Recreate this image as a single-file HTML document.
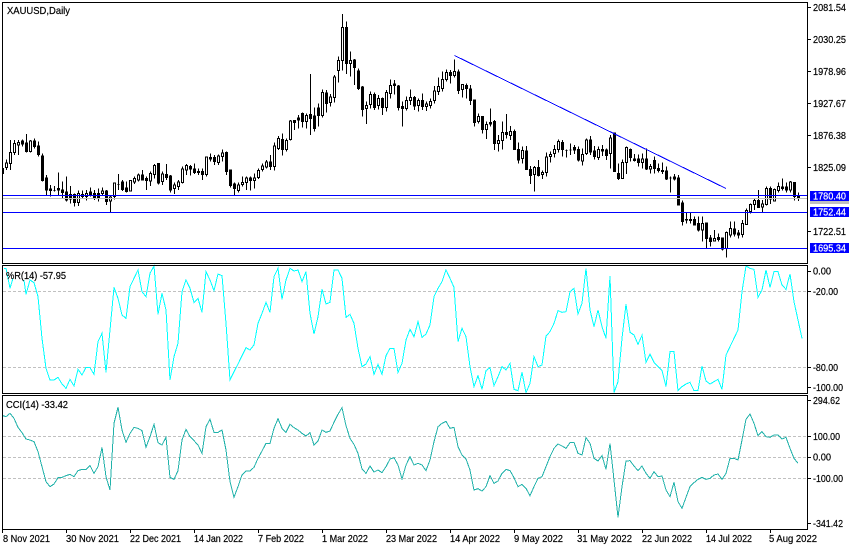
<!DOCTYPE html>
<html><head><meta charset="utf-8"><title>XAUUSD Daily</title>
<style>
html,body{margin:0;padding:0;background:#fff;width:860px;height:550px;overflow:hidden}
svg{display:block}
text{font-family:"Liberation Sans",sans-serif;font-size:10.5px;fill:#000;stroke:#000;stroke-width:.2px}
text.w{fill:#fff;stroke:#fff}
.n{vector-effect:non-scaling-stroke}
</style></head><body>
<svg width="860" height="550" viewBox="0 0 860 550" xmlns="http://www.w3.org/2000/svg">
<rect width="860" height="550" fill="#fff"/>

<!-- candles: y values in 3x space -->
<g transform="scale(1 .33333)" shape-rendering="crispEdges" stroke="#000" stroke-width="1">
<path class="n" fill="none" d="M3.5 505V520M6.5 478V510M10.5 420V510M14.5 420V465M18.5 420V465M22.5 418V440M26.5 402V458M30.5 420V458M34.5 415V445M38.5 425V470M42.5 460V545M46.5 525V585M50.5 555V590M54.5 558V575M58.5 518V585M62.5 545V595M66.5 530V605M70.5 558V610M74.5 580V620M78.5 572V618M82.5 572V595M86.5 570V602M90.5 562V590M94.5 570V600M98.5 565V605M102.5 562V585M106.5 570V615M110.5 585V636M114.5 548V598M118.5 522V570M122.5 540V573M126.5 545V578M130.5 540V575M134.5 530V552M138.5 520V545M142.5 510V540M146.5 530V570M150.5 515V558M154.5 492V535M158.5 490V553M162.5 515V555M166.5 492V540M170.5 525V578M174.5 548V582M178.5 540V570M182.5 500V550M186.5 492V525M190.5 495V527M194.5 490V522M198.5 505V525M202.5 505V540M206.5 470V530M210.5 460V485M214.5 465V495M218.5 463V495M222.5 448V485M226.5 455V525M230.5 508V563M234.5 548V585M238.5 548V577M242.5 530V560M246.5 530V570M250.5 530V572M254.5 520V565M258.5 505V537M262.5 490V515M266.5 480V505M270.5 465V510M274.5 428V512M278.5 408V450M282.5 400V467M286.5 415V455M290.5 360V422M294.5 360V390M298.5 345V385M302.5 337V382M306.5 340V385M310.5 222V405M314.5 322V395M318.5 310V380M322.5 268V352M326.5 270V338M330.5 282V320M334.5 225V308M338.5 170V248M342.5 42V212M346.5 65V222M350.5 155V230M354.5 177V255M358.5 205V270M362.5 258V350M366.5 305V372M370.5 275V325M374.5 278V330M378.5 285V328M382.5 292V345M386.5 270V335M390.5 238V295M394.5 240V283M398.5 255V332M402.5 305V380M406.5 290V332M410.5 268V315M414.5 288V330M418.5 295V335M422.5 280V330M426.5 305V333M430.5 295V325M434.5 258V310M438.5 232V285M442.5 215V275M446.5 208V245M450.5 210V250M454.5 178V232M458.5 208V282M462.5 253V292M466.5 250V295M470.5 255V315M474.5 298V380M478.5 340V370M482.5 348V400M486.5 365V417M490.5 325V380M494.5 360V450M498.5 405V455M502.5 365V448M506.5 342V415M510.5 378V420M514.5 388V450M518.5 428V490M522.5 440V490M526.5 438V510M530.5 498V552M534.5 498V575M538.5 480V530M542.5 512V537M546.5 458V530M550.5 455V488M554.5 435V472M558.5 418V458M562.5 420V470M566.5 448V473M570.5 430V465M574.5 435V462M578.5 440V485M582.5 445V497M586.5 415V465M590.5 408V465M594.5 438V478M598.5 440V480M602.5 435V468M606.5 445V480M610.5 405V505M614.5 398V515M618.5 490V540M622.5 478V535M626.5 440V522M630.5 445V485M634.5 462V485M638.5 463V500M642.5 460V505M646.5 445V510M650.5 492V520M654.5 470V520M658.5 490V517M662.5 487V522M666.5 500V540M670.5 530V578M674.5 522V542M678.5 525V617M682.5 602V677M686.5 638V670M690.5 638V670M694.5 650V677M698.5 650V695M702.5 650V725M706.5 668V745M710.5 705V740M714.5 690V725M718.5 700V725M722.5 712V752M726.5 695V773M730.5 665V712M734.5 665V710M738.5 690V715M742.5 660V713M746.5 625V675M750.5 610V640M754.5 595V630M758.5 570V622M762.5 600V636M766.5 560V617M770.5 560V612M774.5 565V605M778.5 548V578M782.5 535V572M786.5 547V578M790.5 543V578M794.5 546V602M798.5 578V603M800 595H803"/>
<!-- bearish -->
<path class="n" fill="#000" d="M2.5 505h1V520h-1zM21.5 423h2V432h-2zM25.5 429h2V455h-2zM33.5 423h2V440h-2zM37.5 438h2V463h-2zM41.5 468h2V542h-2zM45.5 534h2V570h-2zM49.5 567h2V572h-2zM53.5 571h2V571h-2zM57.5 565h2V570h-2zM61.5 570h2V578h-2zM65.5 576h2V600h-2zM69.5 583h2V597h-2zM73.5 583h2V608h-2zM89.5 576h2V585h-2zM93.5 580h2V596h-2zM97.5 580h2V595h-2zM105.5 573h2V605h-2zM117.5 553h2V553h-2zM121.5 546h2V568h-2zM125.5 564h2V574h-2zM141.5 525h2V540h-2zM145.5 536h2V541h-2zM157.5 491h2V549h-2zM165.5 524h2V532h-2zM169.5 528h2V570h-2zM189.5 500h2V507h-2zM193.5 507h2V518h-2zM197.5 514h2V518h-2zM201.5 514h2V523h-2zM209.5 473h2V477h-2zM213.5 473h2V485h-2zM225.5 457h2V515h-2zM229.5 510h2V556h-2zM233.5 552h2V565h-2zM249.5 534h2V541h-2zM269.5 486h2V500h-2zM281.5 418h2V449h-2zM293.5 362h2V367h-2zM297.5 354h2V360h-2zM301.5 340h2V365h-2zM309.5 343h2V356h-2zM313.5 348h2V386h-2zM317.5 324h2V347h-2zM325.5 279h2V311h-2zM345.5 82h2V190h-2zM353.5 180h2V203h-2zM357.5 213h2V266h-2zM361.5 261h2V329h-2zM373.5 283h2V323h-2zM381.5 295h2V322h-2zM393.5 252h2V256h-2zM397.5 258h2V323h-2zM401.5 319h2V326h-2zM413.5 292h2V318h-2zM421.5 301h2V320h-2zM449.5 217h2V227h-2zM457.5 216h2V272h-2zM465.5 256h2V266h-2zM469.5 267h2V302h-2zM473.5 300h2V368h-2zM481.5 349h2V389h-2zM489.5 367h2V372h-2zM493.5 364h2V431h-2zM505.5 397h2V404h-2zM513.5 394h2V449h-2zM517.5 448h2V480h-2zM525.5 453h2V509h-2zM529.5 508h2V527h-2zM537.5 502h2V526h-2zM561.5 427h2V448h-2zM565.5 452h2V452h-2zM569.5 450h2V450h-2zM573.5 443h2V450h-2zM577.5 448h2V480h-2zM589.5 420h2V456h-2zM593.5 453h2V470h-2zM601.5 449h2V453h-2zM605.5 450h2V467h-2zM613.5 399h2V514h-2zM617.5 520h2V535h-2zM629.5 448h2V473h-2zM633.5 477h2V481h-2zM637.5 477h2V488h-2zM645.5 477h2V507h-2zM653.5 481h2V506h-2zM657.5 506h2V512h-2zM661.5 512h2V514h-2zM665.5 513h2V537h-2zM669.5 534h2V534h-2zM673.5 531h2V537h-2zM677.5 534h2V615h-2zM681.5 609h2V665h-2zM685.5 658h2V660h-2zM689.5 658h2V662h-2zM693.5 658h2V675h-2zM697.5 671h2V690h-2zM705.5 669h2V716h-2zM709.5 714h2V725h-2zM717.5 712h2V718h-2zM721.5 714h2V747h-2zM733.5 687h2V702h-2zM737.5 699h2V705h-2zM757.5 601h2V622h-2zM769.5 565h2V597h-2zM781.5 561h2V566h-2zM785.5 561h2V570h-2zM793.5 547h2V590h-2zM797.5 589h2V596h-2z"/>
<!-- bullish -->
<path class="n" fill="#fff" d="M5.5 489h2V503h-2zM9.5 457h2V491h-2zM13.5 431h2V458h-2zM17.5 427h2V435h-2zM29.5 423h2V455h-2zM77.5 580h2V608h-2zM81.5 583h2V590h-2zM85.5 580h2V590h-2zM101.5 573h2V581h-2zM109.5 591h2V603h-2zM113.5 549h2V590h-2zM129.5 541h2V573h-2zM133.5 535h2V546h-2zM137.5 525h2V540h-2zM149.5 520h2V543h-2zM153.5 496h2V524h-2zM161.5 522h2V545h-2zM173.5 555h2V566h-2zM177.5 546h2V560h-2zM181.5 507h2V548h-2zM185.5 497h2V510h-2zM205.5 471h2V524h-2zM217.5 468h2V487h-2zM221.5 459h2V470h-2zM237.5 555h2V571h-2zM241.5 547h2V554h-2zM245.5 534h2V548h-2zM253.5 534h2V541h-2zM257.5 511h2V533h-2zM261.5 498h2V508h-2zM265.5 486h2V501h-2zM273.5 438h2V499h-2zM277.5 415h2V446h-2zM285.5 421h2V449h-2zM289.5 363h2V419h-2zM305.5 346h2V365h-2zM321.5 277h2V346h-2zM329.5 291h2V308h-2zM333.5 231h2V292h-2zM337.5 181h2V212h-2zM341.5 82h2V181h-2zM349.5 181h2V190h-2zM365.5 316h2V326h-2zM369.5 283h2V314h-2zM377.5 295h2V317h-2zM385.5 277h2V322h-2zM389.5 256h2V280h-2zM405.5 301h2V325h-2zM409.5 292h2V302h-2zM417.5 301h2V317h-2zM425.5 312h2V320h-2zM429.5 304h2V317h-2zM433.5 273h2V301h-2zM437.5 259h2V275h-2zM441.5 238h2V266h-2zM445.5 217h2V238h-2zM453.5 214h2V227h-2zM461.5 254h2V269h-2zM477.5 349h2V365h-2zM485.5 373h2V388h-2zM497.5 421h2V431h-2zM501.5 397h2V422h-2zM509.5 394h2V407h-2zM521.5 452h2V476h-2zM533.5 502h2V524h-2zM541.5 517h2V524h-2zM545.5 471h2V517h-2zM549.5 463h2V470h-2zM553.5 448h2V461h-2zM557.5 424h2V448h-2zM581.5 463h2V483h-2zM585.5 420h2V461h-2zM597.5 449h2V473h-2zM609.5 414h2V461h-2zM621.5 488h2V535h-2zM625.5 443h2V487h-2zM641.5 477h2V487h-2zM649.5 499h2V507h-2zM701.5 670h2V690h-2zM713.5 716h2V723h-2zM725.5 697h2V745h-2zM729.5 686h2V705h-2zM741.5 670h2V704h-2zM745.5 631h2V673h-2zM749.5 613h2V635h-2zM753.5 601h2V614h-2zM761.5 612h2V621h-2zM765.5 565h2V613h-2zM773.5 569h2V603h-2zM777.5 559h2V572h-2zM789.5 546h2V570h-2z"/>
</g>

<!-- horizontal levels -->
<g shape-rendering="crispEdges">
<rect x="3" y="198" width="804" height="1" fill="#c0c0c0"/>
<rect x="3" y="195" width="804" height="1" fill="#0000ff"/>
<rect x="3" y="212" width="804" height="1" fill="#0000ff"/>
<rect x="3" y="248" width="804" height="1" fill="#0000ff"/>
</g>
<path d="M454.5 55.5L726 188.5" stroke="#0000ff" fill="none" shape-rendering="crispEdges"/>

<!-- dashed levels -->
<g stroke="#c0c0c0" stroke-dasharray="3 2" shape-rendering="crispEdges">
<path d="M3 291.5H807M3 367.5H807M3 436.5H807M3 457.5H807M3 478.5H807"/>
</g>

<!-- %R -->
<g transform="translate(0 260) scale(1 .33333)" fill="none" shape-rendering="crispEdges">
<polyline class="n" stroke="#00ffff" points="4,25 6,25 10,85 13,55"/>
<polyline class="n" stroke="#00ffff" points="24,60 26,103 30,60 34,68 38,110 42,235 46,325 50,360 54,360 58,352 62,372 66,385 70,358 74,378 78,328 82,345 86,322 90,323 94,343 98,245 102,220 106,337 110,210 114,82 118,115 122,165 126,175 130,80 134,55 138,30 142,95 146,110 150,40 154,18 158,163 162,100 166,150 170,360 174,290 178,250 182,95 186,60 190,85 194,127 198,115 202,157 206,35 210,60 214,92 218,42 222,47 226,190 230,360 234,335 238,312 242,287 246,263 250,270 254,255 258,190 262,160 266,127 270,157 274,50 278,25 282,118 286,60 290,25 294,33 298,30 302,65 306,35 310,160 314,222 318,170 322,88 326,132 330,127 334,30 338,30 342,55 346,172 350,163 354,190 358,265 362,320 366,312 370,290 374,343 378,313 382,343 386,287 390,265 394,265 398,337 402,310 406,240 410,208 414,230 418,185 422,232 426,222 430,195 434,110 438,85 442,65 446,30 450,55 454,82 458,245 462,205 466,230 470,320 474,380 478,347 482,388 486,332 490,323 494,377 498,350 502,320 506,330 510,310 514,388 518,392 522,337 526,398 530,370 534,290 538,320 542,315 546,228 550,215 554,190 558,152 562,157 566,155 570,95 574,85 578,162 582,130 586,25 590,150 594,200 598,150 602,200 606,235 610,48 614,398 618,365 622,235 626,132 630,217 634,225 638,253 642,226 646,307 650,283 654,307 658,320 662,332 666,380 670,275 674,275 678,392 682,380 686,372 690,367 694,392 698,392 702,318 706,363 710,372 714,365 718,358 722,388 726,285 730,260 734,235 738,210 742,95 746,18 750,25 754,28 758,112 762,90 766,30 770,82 774,35 778,35 782,75 786,88 790,42 794,125 798,180 802,235"/>
<polyline class="n" stroke="#20b2aa" points="3,467 6,470 10,460 14,475 18,502 22,518 26,537 30,540 34,545 38,575 42,620 46,665 50,680 54,672 58,653 62,652 66,647 70,643 74,650 78,632 82,628 86,628 90,617 94,640 98,620 102,562 106,650 110,690 114,490 118,442 122,510 126,547 130,520 134,502 138,505 142,512 146,562 150,530 154,493 158,548 162,555 166,532 170,652 174,658 178,632 182,540 186,508 190,530 194,542 198,555 202,580 206,500 210,478 214,517 218,517 222,510 226,570 230,665 234,712 238,680 242,645 246,633 250,633 254,622 258,595 262,573 266,550 270,550 274,505 278,476 282,505 286,517 290,493 294,503 298,510 302,520 306,528 310,518 314,555 318,543 322,510 326,517 330,513 334,487 338,463 342,443 346,497 350,535 354,553 358,580 362,627 366,640 370,618 374,636 378,630 382,638 386,620 390,597 394,593 398,615 402,657 406,615 410,590 414,615 418,610 422,615 426,632 430,600 434,545 438,500 442,490 446,484 450,505 454,502 458,560 462,585 466,597 470,630 474,690 478,686 482,693 486,680 490,647 494,670 498,663 502,640 506,628 510,632 514,653 518,680 522,673 526,685 530,707 534,680 538,655 542,650 546,620 550,590 554,565 558,552 562,558 566,565 570,548 574,547 578,580 582,585 586,533 590,550 594,595 598,603 602,587 606,628 610,550 614,660 618,772 622,680 626,603 630,602 634,618 638,632 642,618 646,640 650,655 654,635 658,650 662,648 666,690 670,710 674,667 678,725 682,745 686,712 690,680 694,668 698,658 702,652 706,658 710,655 714,645 718,642 722,658 726,640 730,595 734,595 738,600 742,540 746,478 750,462 754,490 758,527 762,515 766,530 770,532 774,525 778,525 782,537 786,532 790,565 794,595 798,610"/>
</g>

<!-- frames -->
<g stroke="#000" fill="none" shape-rendering="crispEdges">
<path d="M2.5 2.5H807.5V263.5H2.5ZM2.5 265.5H807.5V393.5H2.5ZM2.5 395.5H807.5V529.5H2.5Z"/>
<path d="M808 7.5h3M808 39.5h3M808 71.5h3M808 103.5h3M808 135.5h3M808 167.5h3M808 231.5h3M808 271.5h3M808 291.5h3M808 367.5h3M808 387.5h3M808 400.5h3M808 436.5h3M808 457.5h3M808 478.5h3M808 523.5h3"/>
<path d="M2.5 530v3M66.5 530v3M130.5 530v3M194.5 530v3M258.5 530v3M322.5 530v3M386.5 530v3M450.5 530v3M514.5 530v3M578.5 530v3M642.5 530v3M706.5 530v3M770.5 530v3"/>
</g>

<!-- price labels -->
<g shape-rendering="crispEdges">
<rect x="810" y="200" width="39" height="4" fill="#c0c0c0"/>
<rect x="810" y="191" width="39" height="10" fill="#0000ff"/>
<rect x="810" y="207" width="39" height="10" fill="#0000ff"/>
<rect x="810" y="243" width="39" height="10" fill="#0000ff"/>
</g>
<g>
<text x="813" y="11" textLength="33" lengthAdjust="spacingAndGlyphs">2081.54</text>
<text x="813" y="43" textLength="33" lengthAdjust="spacingAndGlyphs">2030.25</text>
<text x="813" y="75" textLength="33" lengthAdjust="spacingAndGlyphs">1978.96</text>
<text x="813" y="107" textLength="33" lengthAdjust="spacingAndGlyphs">1927.67</text>
<text x="813" y="139" textLength="33" lengthAdjust="spacingAndGlyphs">1876.38</text>
<text x="813" y="171" textLength="33" lengthAdjust="spacingAndGlyphs">1825.09</text>
<text x="813" y="235" textLength="33" lengthAdjust="spacingAndGlyphs">1722.51</text>
<text class="w" x="813" y="199.500" textLength="33" lengthAdjust="spacingAndGlyphs">1780.40</text>
<text class="w" x="813" y="215.500" textLength="33" lengthAdjust="spacingAndGlyphs">1752.44</text>
<text class="w" x="813" y="251.500" textLength="33" lengthAdjust="spacingAndGlyphs">1695.34</text>

<text x="813" y="274.500" textLength="18" lengthAdjust="spacingAndGlyphs">0.00</text>
<text x="813" y="295" textLength="25" lengthAdjust="spacingAndGlyphs">-20.00</text>
<text x="813" y="371" textLength="25" lengthAdjust="spacingAndGlyphs">-80.00</text>
<text x="813" y="391" textLength="30" lengthAdjust="spacingAndGlyphs">-100.00</text>
<text x="813" y="404" textLength="27" lengthAdjust="spacingAndGlyphs">294.62</text>
<text x="813" y="440" textLength="27" lengthAdjust="spacingAndGlyphs">100.00</text>
<text x="813" y="460.500" textLength="18" lengthAdjust="spacingAndGlyphs">0.00</text>
<text x="813" y="482" textLength="30" lengthAdjust="spacingAndGlyphs">-100.00</text>
<text x="813" y="527" textLength="30" lengthAdjust="spacingAndGlyphs">-341.42</text>

<text x="7" y="14" textLength="63" lengthAdjust="spacingAndGlyphs">XAUUSD,Daily</text>
<text x="6" y="279" textLength="60" lengthAdjust="spacingAndGlyphs">%R(14) -57.95</text>
<text x="6" y="408" textLength="62" lengthAdjust="spacingAndGlyphs">CCI(14) -33.42</text>

<text x="3" y="542" textLength="47" lengthAdjust="spacingAndGlyphs">8 Nov 2021</text>
<text x="66" y="542" textLength="53" lengthAdjust="spacingAndGlyphs">30 Nov 2021</text>
<text x="130" y="542" textLength="51" lengthAdjust="spacingAndGlyphs">22 Dec 2021</text>
<text x="194" y="542" textLength="49" lengthAdjust="spacingAndGlyphs">14 Jan 2022</text>
<text x="258" y="542" textLength="46" lengthAdjust="spacingAndGlyphs">7 Feb 2022</text>
<text x="322" y="542" textLength="46" lengthAdjust="spacingAndGlyphs">1 Mar 2022</text>
<text x="386" y="542" textLength="51" lengthAdjust="spacingAndGlyphs">23 Mar 2022</text>
<text x="450" y="542" textLength="50" lengthAdjust="spacingAndGlyphs">14 Apr 2022</text>
<text x="514" y="542" textLength="49" lengthAdjust="spacingAndGlyphs">9 May 2022</text>
<text x="577" y="542" textLength="55" lengthAdjust="spacingAndGlyphs">31 May 2022</text>
<text x="642" y="542" textLength="50" lengthAdjust="spacingAndGlyphs">22 Jun 2022</text>
<text x="706" y="542" textLength="46" lengthAdjust="spacingAndGlyphs">14 Jul 2022</text>
<text x="769" y="542" textLength="48" lengthAdjust="spacingAndGlyphs">5 Aug 2022</text>
</g>
</svg>
</body></html>
